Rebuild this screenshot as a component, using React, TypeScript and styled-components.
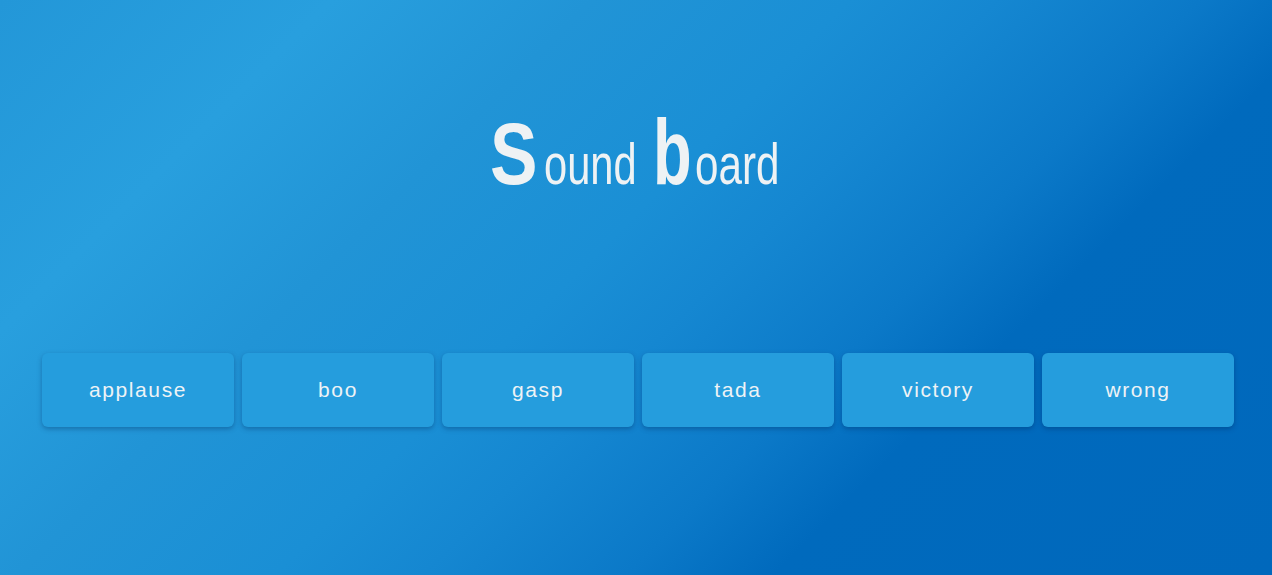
import styled, {createGlobalStyle} from "styled-components";

const GlobalStyle = createGlobalStyle`
  html, body {
    margin: 0;
    padding: 0;
  }
  body {
    font-family: "Liberation Sans", Arial, sans-serif;
  }
`;

const Page = styled.div`
  width: 100%;
  height: 575px;
  overflow: hidden;
  background: linear-gradient(135deg, #2397d8 0%, #289fde 18%, #2194d6 32%, #1a8fd5 46%, #1587d1 54%, #0b79c8 65%, #006abd 73%, #0068bc 100%);
  display: flex;
  flex-direction: column;
  align-items: center;
`;

const Title = styled.h1`
  margin: 106px 0 0;
  height: 100px;
  display: flex;
  align-items: baseline;
  font-family: "Liberation Sans", Arial, sans-serif;
  color: #eef2f4;
  line-height: 1;
  white-space: nowrap;
`;

// a narrow box; the glyphs inside are squeezed to fit it
const Part = styled.span<{$w: number; $gap?: number}>`
  display: inline-block;
  width: ${(p) => p.$w}px;
  margin-left: ${(p) => p.$gap ?? 0}px;
`;

const Glyphs = styled.span<{$size: number; $bold?: boolean; $s: number}>`
  display: inline-block;
  font-size: ${(p) => p.$size}px;
  font-weight: ${(p) => (p.$bold ? 700 : 400)};
  transform: scaleX(${(p) => p.$s});
  transform-origin: left center;
`;

const Board = styled.div`
  margin-top: 147px;
  display: flex;
  gap: 8px;
  padding-left: 4px;
`;

const SoundButton = styled.button`
  width: 192px;
  height: 74px;
  border: none;
  border-radius: 6px;
  background: #259ddd;
  color: #eef3f6;
  font-family: "Liberation Sans", Arial, sans-serif;
  font-size: 21px;
  letter-spacing: 1.6px;
  box-shadow: 0 2px 5px rgba(0, 40, 90, 0.35);
  cursor: pointer;
`;

const sounds = ["applause", "boo", "gasp", "tada", "victory", "wrong"];

function App() {
  return <>
    <GlobalStyle/>
    <Page>
      <Title>
        <Part $w={54}><Glyphs $size={88} $bold $s={0.81}>S</Glyphs></Part>
        <Part $w={94}><Glyphs $size={57} $s={0.73}>ound</Glyphs></Part>
        <Part $w={42} $gap={15}><Glyphs $size={93} $bold $s={0.68}>b</Glyphs></Part>
        <Part $w={87}><Glyphs $size={57} $s={0.74}>oard</Glyphs></Part>
      </Title>
      <Board>
        {sounds.map((s) => <SoundButton key={s}>{s}</SoundButton>)}
      </Board>
    </Page>
  </>
}

export default App
